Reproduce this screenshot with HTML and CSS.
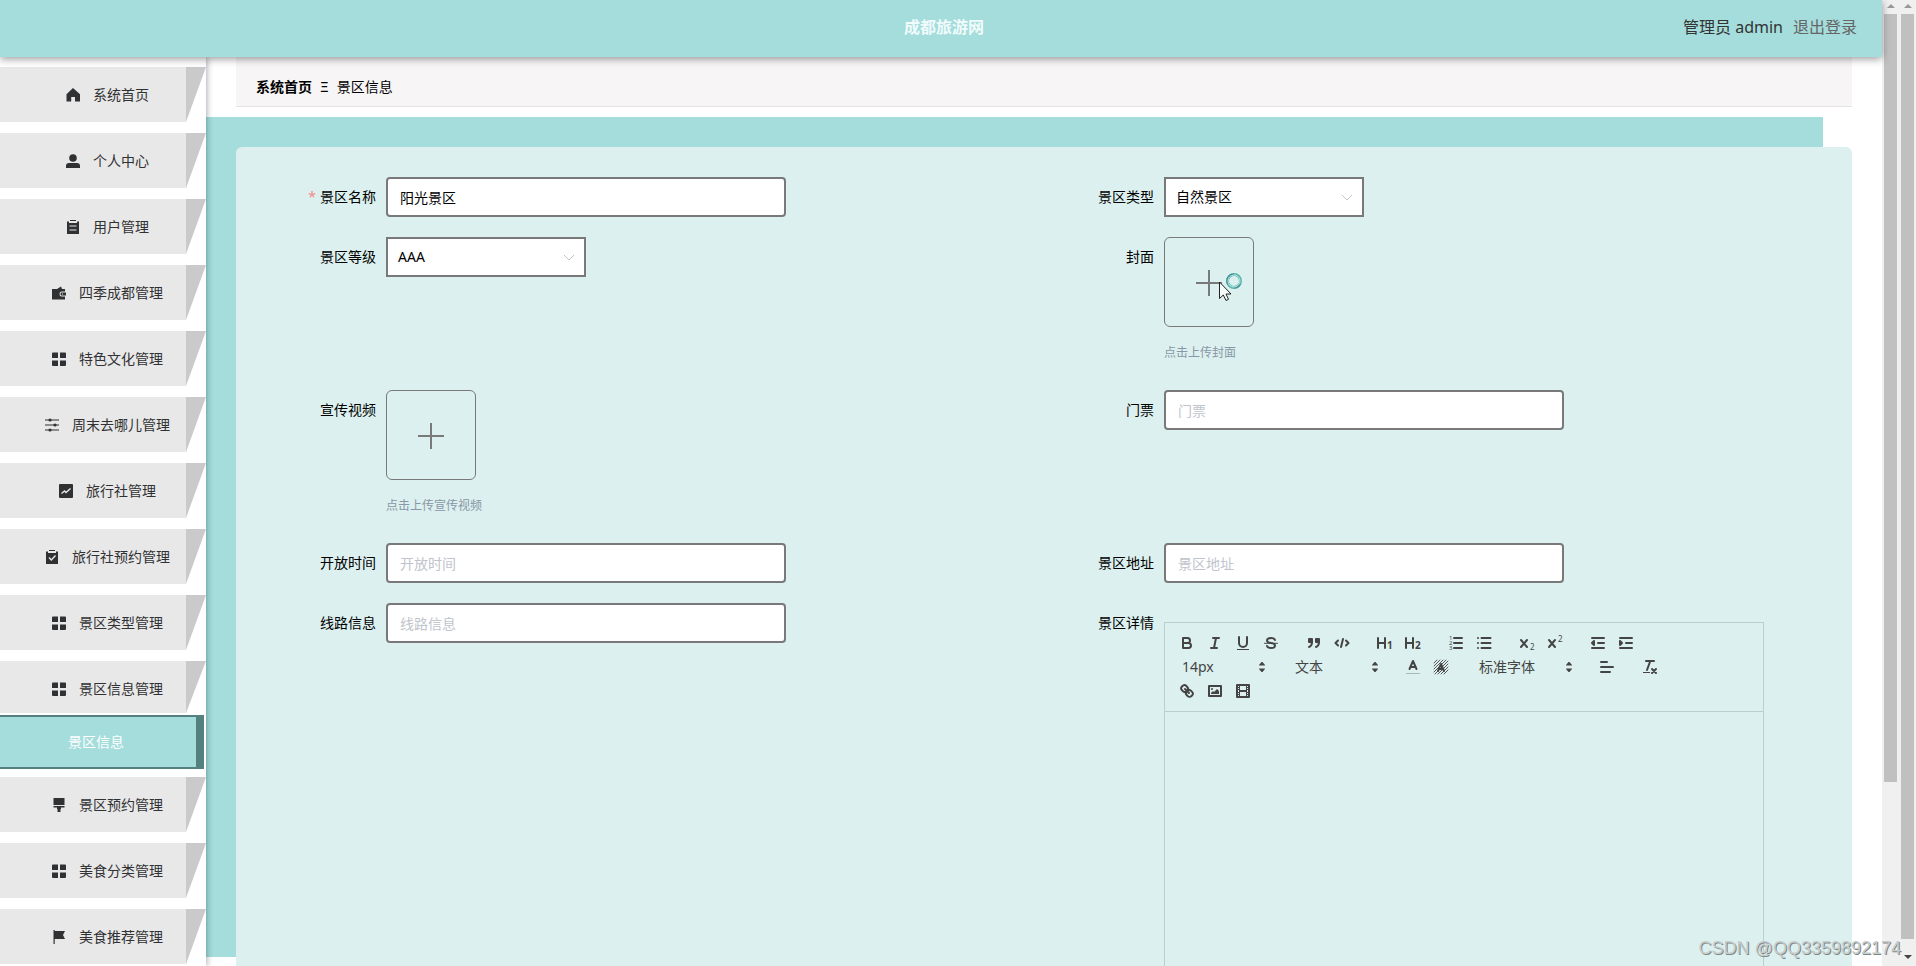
FILE: index.html
```html
<!DOCTYPE html>
<html lang="zh-CN">
<head>
<meta charset="utf-8">
<title>成都旅游网</title>
<link rel="stylesheet" href="styles.css">
</head>
<body>
<svg class="defs" aria-hidden="true">
  <defs>
    <symbol id="i-grid" viewBox="0 0 14 14"><path d="M0 1.500Q0 .5 1 .5H6V6H0zM8 .5H13Q14 .5 14 1.500V6H8zM0 8.500H6V14H1Q0 14 0 13zM8 8.500H14V13Q14 14 13 14H8z"/></symbol>
    <symbol id="i-arrows" viewBox="0 0 18 18"><path d="M6 11Q6 10.500 6.500 10.500H11.500Q12 10.500 12 11L9.500 14H8.500zM6 7Q6 7.500 6.500 7.500H11.500Q12 7.500 12 7L9.500 4H8.500z"/></symbol>
  </defs>
</svg>
<div class="page">
  <div class="app">
    <header class="topbar">
      <h1 class="topbar-title">成都旅游网</h1>
      <div class="topbar-user"><span>管理员 admin</span><a class="logout" href="#">退出登录</a></div>
    </header>
    <div class="body">
      <nav class="sidebar">
        <ul class="menu">
          <li class="menu-item"><a href="#"><svg class="icon" viewBox="0 0 14 14"><path d="M7 0L14 6.200V13.500H9V9H5.200V13.500H.5V6.200z"/></svg>系统首页</a></li>
          <li class="menu-item"><a href="#"><svg class="icon" viewBox="0 0 14 14"><circle cx="7" cy="4" r="3.800"/><path d="M0 14V12Q0 9 3 9H11Q14 9 14 12V14z"/></svg>个人中心</a></li>
          <li class="menu-item"><a href="#"><svg class="icon" viewBox="0 0 14 14"><path fill-rule="evenodd" d="M4 0H10V1H4zM1 1.500H3V3H11V1.500H13V14H1zM3.500 5.500V6.500H10.500V5.500zM3.500 9.500V10.500H10.500V9.500z"/></svg>用户管理</a></li>
          <li class="menu-item"><a href="#"><svg class="icon" viewBox="0 0 14 14"><path fill-rule="evenodd" d="M5 3L9 .5L10 3H13V5.500H9.500Q7.500 5.500 7.500 8Q7.500 10.500 9.500 10.500H13V13.500H0V3zM9.500 6.500H14V9.500H9.500Q8.500 9.500 8.500 8Q8.500 6.500 9.500 6.500zM10 7.500V8.500H11V7.500z"/></svg>四季成都管理</a></li>
          <li class="menu-item"><a href="#"><svg class="icon"><use href="#i-grid"/></svg>特色文化管理</a></li>
          <li class="menu-item"><a href="#"><svg class="icon" viewBox="0 0 14 14"><path d="M0 2H14M0 7H14M0 12H14" stroke="#303133" stroke-width="1.200"/><circle cx="5" cy="2" r="1.600"/><circle cx="10" cy="7" r="1.600"/><circle cx="5" cy="12" r="1.600"/></svg>周末去哪儿管理</a></li>
          <li class="menu-item"><a href="#"><svg class="icon" viewBox="0 0 14 14"><rect width="14" height="14" rx="1"/><path d="M2.500 9.500L5.500 7L7 8.500L11.500 4.500" fill="none" stroke="#e8e8e8" stroke-width="1.400"/></svg>旅行社管理</a></li>
          <li class="menu-item"><a href="#"><svg class="icon" viewBox="0 0 14 14"><path d="M4 0H10V1H4zM1 1.500H3V3H11V1.500H13V14H1z"/><path d="M4 7.500L6.300 10L10.500 5.500" fill="none" stroke="#e8e8e8" stroke-width="1.400"/></svg>旅行社预约管理</a></li>
          <li class="menu-item"><a href="#"><svg class="icon"><use href="#i-grid"/></svg>景区类型管理</a></li>
          <li class="menu-item open"><a href="#"><svg class="icon"><use href="#i-grid"/></svg>景区信息管理</a></li>
          <li class="submenu"><a href="#">景区信息</a></li>
          <li class="menu-item"><a href="#"><svg class="icon" viewBox="0 0 14 14"><path d="M1.500 0H12.500V7H1.500zM1.500 8H12.500V9.500H9V11H8.500V14H5.500V11H5V9.500H1.500z"/></svg>景区预约管理</a></li>
          <li class="menu-item"><a href="#"><svg class="icon"><use href="#i-grid"/></svg>美食分类管理</a></li>
          <li class="menu-item"><a href="#"><svg class="icon" viewBox="0 0 14 14"><path d="M1.500 0H2.700V1H13L11 5L13 9H2.700V14H1.500z"/></svg>美食推荐管理</a></li>
        </ul>
      </nav>
      <main class="main">
        <nav class="crumbs"><a href="#">系统首页</a><span class="crumb-sep">Ξ</span><span>景区信息</span></nav>
        <div class="stage">
          <form class="panel">
            <div class="field">
              <label class="label" for="name"><span class="required">*</span>景区名称</label>
              <input class="input" id="name" type="text" value="阳光景区">
            </div>
            <div class="field">
              <label class="label" for="type">景区类型</label>
              <div class="select-box">
                <select class="select" id="type"><option>自然景区</option></select>
                <svg class="chevron" viewBox="0 0 14 14"><path d="M2 5L7 10L12 5"/></svg>
              </div>
            </div>
            <div class="field">
              <label class="label" for="level">景区等级</label>
              <div class="select-box">
                <select class="select" id="level"><option>AAA</option></select>
                <svg class="chevron" viewBox="0 0 14 14"><path d="M2 5L7 10L12 5"/></svg>
              </div>
            </div>
            <div class="field">
              <label class="label" for="cover">封面</label>
              <div class="upload">
                <button class="upload-box" id="cover" type="button" aria-label="点击上传封面"><svg viewBox="0 0 26 26"><path d="M0 13H26M13 0V26"/></svg></button>
                <p class="hint">点击上传封面</p>
                <svg class="pointer" viewBox="0 0 26 32">
                  <circle cx="17" cy="10" r="6.500" fill="none" stroke="#5fb5ae" stroke-width="3"/>
                  <path d="M11 13A6.500 6.500 0 0 1 17 3.500M23 13A6.500 6.500 0 0 1 17 16.500" fill="none" stroke="#4a8f98" stroke-width="2"/>
                  <circle cx="17" cy="10" r="6" fill="none" stroke="#b9efe8"/>
                  <path d="M2.500 11V27.500L6.300 24L9 29.500L11.500 28.300L9 23H14z" fill="#f4fbfa" stroke="#222"/>
                </svg>
              </div>
            </div>
            <div class="field">
              <label class="label" for="video">宣传视频</label>
              <div class="upload">
                <button class="upload-box" id="video" type="button" aria-label="点击上传宣传视频"><svg viewBox="0 0 26 26"><path d="M0 13H26M13 0V26"/></svg></button>
                <p class="hint">点击上传宣传视频</p>
              </div>
            </div>
            <div class="field">
              <label class="label" for="ticket">门票</label>
              <input class="input" id="ticket" type="text" placeholder="门票">
            </div>
            <div class="field">
              <label class="label" for="hours">开放时间</label>
              <input class="input" id="hours" type="text" placeholder="开放时间">
            </div>
            <div class="field">
              <label class="label" for="address">景区地址</label>
              <input class="input" id="address" type="text" placeholder="景区地址">
            </div>
            <div class="field">
              <label class="label" for="route">线路信息</label>
              <input class="input" id="route" type="text" placeholder="线路信息">
            </div>
            <div class="field">
              <label class="label" for="detail">景区详情</label>
              <div class="editor">
                <div class="toolbar">
                  <div class="tools">
                    <button type="button" aria-label="bold"><svg viewBox="0 0 18 18"><path d="M5 4H9.500a2.500 2.500 0 0 1 0 5H5zM5 9h5.500a2.500 2.500 0 0 1 0 5H5z"/></svg></button>
                    <button type="button" aria-label="italic"><svg viewBox="0 0 18 18"><path d="M7 4H13M5 14H11M8 14L10 4"/></svg></button>
                    <button type="button" aria-label="underline"><svg viewBox="0 0 18 18"><path d="M5 3V9a4 4 0 0 0 8 0V3"/><path class="fill" d="M3 15H15V16H3z"/></svg></button>
                    <button type="button" aria-label="strike"><svg viewBox="0 0 18 18"><path class="thin" d="M2.500 9.300H15.500"/><path d="M13 6C12.500 4.700 11 4 9 4C6.500 4 5 5.200 5 6.500C5 8 6.500 8.700 9 9C11.500 9.300 13 10 13 11.500C13 12.800 11.500 14 9 14C7 14 5.500 13.300 5 12"/></svg></button>
                  </div>
                  <div class="tools">
                    <button type="button" aria-label="quote"><svg viewBox="0 0 18 18"><path class="both" d="M4 5H7V8H4zM11 5H14V8H11z"/><path d="M7 8c0 4-3 5-3 5M14 8c0 4-3 5-3 5"/></svg></button>
                    <button type="button" aria-label="code"><svg viewBox="0 0 18 18"><path d="M5 6.500L2.500 9L5 11.500M13 6.500L15.500 9L13 11.500M10 5L8 13"/></svg></button>
                  </div>
                  <div class="tools">
                    <button type="button" aria-label="heading 1"><svg viewBox="0 0 18 18"><path d="M2 4V14M9 4V14M2 9H9"/><text class="digit" x="11" y="15">1</text></svg></button>
                    <button type="button" aria-label="heading 2"><svg viewBox="0 0 18 18"><path d="M2 4V14M9 4V14M2 9H9"/><text class="digit" x="11" y="15">2</text></svg></button>
                  </div>
                  <div class="tools">
                    <button type="button" aria-label="ordered list"><svg viewBox="0 0 18 18"><path d="M7 4H15M7 9H15M7 14H15"/><text class="tiny" x="2" y="6">1</text><text class="tiny" x="2" y="11">2</text><text class="tiny" x="2" y="16">3</text></svg></button>
                    <button type="button" aria-label="bullet list"><svg viewBox="0 0 18 18"><path d="M6.500 4H15.500M6.500 9H15.500M6.500 14H15.500M3 4H3M3 9H3M3 14H3"/></svg></button>
                  </div>
                  <div class="tools">
                    <button type="button" aria-label="subscript"><svg viewBox="0 0 18 18"><path d="M3 6L9 13M9 6L3 13"/><text class="script" x="12" y="16">2</text></svg></button>
                    <button type="button" aria-label="superscript"><svg viewBox="0 0 18 18"><path d="M3 6L9 13M9 6L3 13"/><text class="script" x="12" y="8">2</text></svg></button>
                  </div>
                  <div class="tools">
                    <button type="button" aria-label="outdent"><svg viewBox="0 0 18 18"><path d="M3 14H15M3 4H15M9 9H15"/><path class="both" d="M5 7V11L3 9z"/></svg></button>
                    <button type="button" aria-label="indent"><svg viewBox="0 0 18 18"><path d="M3 14H15M3 4H15M9 9H15"/><path class="both" d="M3 7V11L5 9z"/></svg></button>
                  </div>
                  <div class="tools picker"><select aria-label="字号"><option>14px</option></select><svg viewBox="0 0 18 18"><use href="#i-arrows"/></svg></div>
                  <div class="tools picker"><select aria-label="标题"><option>文本</option></select><svg viewBox="0 0 18 18"><use href="#i-arrows"/></svg></div>
                  <div class="tools">
                    <button type="button" aria-label="text color"><svg viewBox="0 0 18 18"><path class="faint" d="M2.500 15.500H15.500"/><path d="M5.500 11L9 3L12.500 11M11.600 9H6.400"/></svg></button>
                    <button type="button" aria-label="background color"><svg viewBox="0 0 18 18"><path class="hatch" d="M2 5L5 2M2 8L8 2M2 11L11 2M2 14L14 2M3 16L16 3M6 16L16 6M9 16L16 9M12 16L16 12"/><path d="M6 13L9 6L12 13M11 11H7"/></svg></button>
                  </div>
                  <div class="tools picker wide"><select aria-label="字体"><option>标准字体</option></select><svg viewBox="0 0 18 18"><use href="#i-arrows"/></svg></div>
                  <div class="tools"><button type="button" aria-label="align"><svg viewBox="0 0 18 18"><path d="M3 4H9M3 9H15M3 14H12"/></svg></button></div>
                  <div class="tools"><button type="button" aria-label="clear format"><svg viewBox="0 0 18 18"><path d="M5 3H13M6 12L9.300 3M11 11L15 15M15 11L11 15"/><path class="fill" d="M2 14H9V15H2z"/></svg></button></div>
                  <div class="tools">
                    <button type="button" aria-label="link"><svg viewBox="0 0 18 18"><path d="M7 7L11 11M8.900 4.600a3.500 3.500 0 0 1 .36 4.700A3.500 3.500 0 0 1 4.600 8.900C3.200 7.500 2 6.400 4.200 4.200S7.500 3.200 8.900 4.600zM13.400 9.100a3.500 3.500 0 0 0-4.700-.36a3.500 3.500 0 0 0 .36 4.700c1.400 1.400 2.500 2.500 4.700.36S14.800 10.500 13.400 9.100z"/></svg></button>
                    <button type="button" aria-label="image"><svg viewBox="0 0 18 18"><path d="M3 4H15V14H3z"/><circle class="fill" cx="6" cy="7" r="1"/><path class="fill" d="M5 12V11L7 9L8 10L11 7L13 9V12z"/></svg></button>
                    <button type="button" aria-label="video"><svg viewBox="0 0 18 18"><path d="M3 3H15V15H3z"/><path class="fill" d="M5 3H6V15H5zM12 3H13V15H12zM5 8H13V10H5zM3 5H6V6H3zM3 7H6V8H3zM3 10H6V11H3zM3 12H6V13H3zM12 5H15V6H12zM12 7H15V8H12zM12 10H15V11H12zM12 12H15V13H12z"/></svg></button>
                  </div>
                </div>
                <textarea class="editor-text" id="detail"></textarea>
              </div>
            </div>
          </form>
        </div>
      </main>
    </div>
  </div>
  <div class="track inner" aria-hidden="true"><i class="up"></i><i class="thumb"></i></div>
  <div class="track outer" aria-hidden="true"><i class="up"></i><i class="thumb"></i><i class="down"></i></div>
  <div class="watermark">CSDN @QQ3359892174</div>
</div>
</body>
</html>
```
FILE: styles.css
```css
* { box-sizing: border-box; }

body {
  margin: 0;
  background: #fff;
  color: #000;
  font: 14px/20px "Noto Sans", "Noto Sans CJK SC", sans-serif;
}

a { color: inherit; text-decoration: none; }
button, input, select, textarea { font: inherit; color: inherit; }
.defs { position: absolute; width: 0; height: 0; }

.page {
  position: relative;
  display: flex;
  height: 100vh;
  overflow: hidden;
}

.app {
  flex: 1;
  min-width: 0;
  display: flex;
  flex-direction: column;
}

/* Top bar */
.topbar {
  position: relative;
  z-index: 3;
  flex: none;
  display: grid;
  grid-template-columns: 1fr auto 1fr;
  align-items: center;
  height: 57px;
  padding: 0 25px 3px 31px;
  background: #a4dddb;
  box-shadow: 0 2px 8px rgba(0, 0, 0, 0.4);
  font-size: 16px;
  line-height: 24px;
}
.topbar-title {
  grid-column: 2;
  margin: 0;
  color: #f0fbfb;
  font-size: 16px;
  font-weight: 700;
}
.topbar-user {
  display: flex;
  justify-content: flex-end;
  gap: 10px;
  color: #333;
}
.logout { color: #666; }

.body {
  flex: 1;
  min-height: 0;
  display: flex;
}

/* Side menu */
.sidebar {
  position: relative;
  z-index: 2;
  flex: none;
  width: 206px;
  background: #fff;
  box-shadow: 1px 0 6px rgba(0, 21, 41, 0.35);
}
.menu {
  margin: 0;
  padding: 10px 0 0;
  list-style: none;
}
.menu-item {
  display: flex;
  height: 55px;
  margin-bottom: 11px;
}
.menu-item::after {
  content: "";
  width: 20px;
  background: #cacaca;
  clip-path: polygon(0 0, 100% 0, 0 100%);
}
.menu-item a {
  flex: 1;
  display: flex;
  align-items: center;
  justify-content: center;
  padding-left: 24px;
  background: #e8e8e8;
  color: #303133;
}
.menu-item.open { height: 52px; margin-bottom: 2px; }
.menu-item.open a { padding-top: 3px; }
.icon {
  width: 14px;
  height: 14px;
  margin: 0 13px 0 5px;
  fill: #303133;
}
.submenu { margin-bottom: 8px; padding-right: 2px; }
.submenu a {
  display: flex;
  align-items: center;
  justify-content: center;
  height: 54px;
  padding-right: 4px;
  border: solid #54807f;
  border-width: 2px 8px 2px 0;
  background: #a4dddb;
  color: #fff;
}

/* Content */
.main {
  flex: 1;
  min-width: 0;
}
.crumbs {
  display: flex;
  align-items: center;
  height: 50px;
  margin: 0 30px 10px;
  padding: 10px 20px 0;
  border-bottom: 1px solid #e6e3e4;
  background: #f7f5f6;
}
.crumbs a { font-weight: 700; }
.crumb-sep { margin: 0 8px; }

.stage {
  height: calc(100vh - 126px);
  margin-right: 59px;
  padding: 30px 0 0 30px;
  background: #a4dddb;
}
.panel {
  display: grid;
  grid-template-columns: 1fr 1fr;
  row-gap: 20px;
  align-items: start;
  margin-right: -29px;
  padding: 30px;
  border-radius: 6px;
  background: #dcf1ef;
}

.field {
  display: flex;
  align-items: flex-start;
}
.label {
  flex: none;
  width: 120px;
  padding-right: 10px;
  line-height: 40px;
  text-align: right;
}
.required { margin-right: 4px; color: #f58b8b; }

.input, .select {
  height: 40px;
  border: 2px solid #797979;
  background: #fff;
}
.input {
  width: 400px;
  padding: 0 12px;
  border-radius: 4px;
}
.input::placeholder { color: #c0c4cc; opacity: 1; }
.select-box { position: relative; width: 200px; }
.select {
  appearance: none;
  width: 100%;
  padding: 0 10px;
  border-radius: 0;
}
.chevron {
  position: absolute;
  top: 13px;
  right: 10px;
  width: 14px;
  height: 14px;
  fill: none;
  stroke: #c0c4cc;
  pointer-events: none;
}

.upload { position: relative; }
.upload-box {
  display: flex;
  align-items: center;
  justify-content: center;
  width: 90px;
  height: 90px;
  padding: 2px 0 0;
  border: 1px solid #797979;
  border-radius: 6px;
  background: transparent;
}
.upload-box svg {
  width: 26px;
  height: 26px;
  stroke: #797979;
  stroke-width: 2;
}
.hint {
  margin: 9px 0 0;
  color: #8896a5;
  font-size: 12px;
  line-height: 34px;
}
.pointer {
  position: absolute;
  top: 34px;
  left: 53px;
  width: 26px;
  height: 32px;
}

/* Rich text editor */
.editor {
  width: 600px;
  margin-top: 19px;
  border: 1px solid #bccfcd;
}
.toolbar {
  display: flex;
  flex-wrap: wrap;
  padding: 8px;
  border-bottom: 1px solid #bccfcd;
}
.tools { display: flex; height: 24px; margin-right: 15px; }
.tools button {
  width: 28px;
  height: 24px;
  padding: 3px 5px;
  border: 0;
  background: none;
}
.tools svg {
  display: block;
  width: 18px;
  height: 18px;
  fill: none;
  stroke: #444;
  stroke-width: 2;
  stroke-linecap: round;
  stroke-linejoin: round;
}
.tools .fill { fill: #444; stroke: none; }
.tools .both { fill: #444; }
.tools .thin { stroke-width: 1; }
.tools .faint { stroke: #a9b8b6; stroke-width: 1; }
.tools .hatch { stroke-width: 1; stroke: #555; }
.tools text {
  fill: #444;
  stroke: none;
  font-family: "Noto Sans", sans-serif;
}
.digit { font-size: 10px; font-weight: 700; }
.script { font-size: 8px; }
.tiny { font-size: 6px; }
.picker {
  position: relative;
  width: 98px;
}
.picker.wide { width: 108px; }
.picker select {
  appearance: none;
  width: 100%;
  padding: 0 0 0 9px;
  border: 0;
  background: none;
  color: #444;
}
.tools.picker svg {
  position: absolute;
  top: 3px;
  right: 0;
  fill: #444;
  stroke: none;
  pointer-events: none;
}
.editor-text {
  display: block;
  width: 100%;
  height: 300px;
  border: 0;
  background: none;
  resize: none;
}

/* Scroll bars */
.track {
  flex: none;
  display: flex;
  flex-direction: column;
  align-items: center;
  width: 17px;
  padding-top: 4px;
  background: #f0f0f0;
}
.up, .down { border: 4px solid transparent; border-top: 0; border-bottom-color: #999; }
.down { margin-top: 16px; border: 4px solid transparent; border-bottom: 0; border-top-color: #444; }
.up { margin-bottom: 6px; }
.thumb { width: 13px; background: #c0c0c0; }
.inner .thumb { height: calc(80vh - 5px); }
.outer .thumb { height: calc(100vh - 41px); }

.watermark {
  position: absolute;
  right: 15px;
  bottom: 8px;
  color: #c6cccc;
  font: 18px/20px "Liberation Sans", Arial, sans-serif;
  text-shadow: 1px 1px 0 #808686;
}
```
